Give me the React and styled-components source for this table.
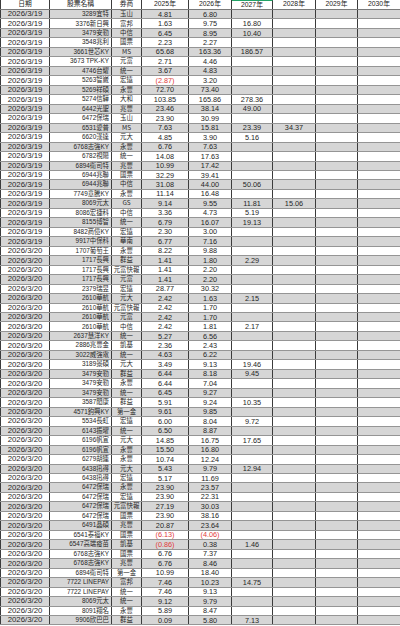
import React from "react";
import styled, { createGlobalStyle } from "styled-components";

const GlobalStyle = createGlobalStyle`
  html, body {
    margin: 0;
    padding: 0;
    background: #fff;
    overflow: hidden;
  }
`;

const COLS = "50px 62px 30px 47px 43px 41px 43px 42px 42px";

const data = [
  ["2026/3/19", "3289宜特", "玉山", "4.81", "6.80"],
  ["2026/3/19", "3376新日興", "富邦", "1.63", "9.75", "16.80"],
  ["2026/3/19", "3479安勤", "中信", "6.45", "8.95", "10.40"],
  ["2026/3/19", "3548兆利", "國票", "2.23", "2.27"],
  ["2026/3/19", "3661世芯KY", "MS", "65.68", "163.36", "186.57"],
  ["2026/3/19", "3673 TPK-KY", "元富", "2.71", "4.46"],
  ["2026/3/19", "4746台耀", "統一", "3.67", "4.83"],
  ["2026/3/19", "5263智崴", "宏遠", "(2.87)", "3.20"],
  ["2026/3/19", "5269祥碩", "永豐", "72.70", "73.40"],
  ["2026/3/19", "5274信驊", "大和", "103.85", "165.86", "278.36"],
  ["2026/3/19", "6442光聖", "兆豐", "23.46", "38.14", "49.00"],
  ["2026/3/19", "6472保瑞", "玉山", "23.90", "30.99"],
  ["2026/3/19", "6531愛普", "MS", "7.63", "15.81", "23.39", "34.37"],
  ["2026/3/19", "6620漢達", "元大", "4.85", "3.90", "5.16"],
  ["2026/3/19", "6768志強KY", "永豐", "6.76", "7.63"],
  ["2026/3/19", "6782視陽", "統一", "14.08", "17.63"],
  ["2026/3/19", "6894衛司特", "兆豐", "10.99", "17.42"],
  ["2026/3/19", "6944兆聯", "國票", "32.29", "39.41"],
  ["2026/3/19", "6944兆聯", "中信", "31.08", "44.00", "50.06"],
  ["2026/3/19", "7749意騰KY", "永豐", "11.14", "16.48"],
  ["2026/3/19", "8069元太", "GS", "9.14", "9.55", "11.81", "15.06"],
  ["2026/3/19", "8086宏捷科", "中信", "3.36", "4.73", "5.19"],
  ["2026/3/19", "8155博智", "統一", "6.79", "16.07", "19.13"],
  ["2026/3/19", "8482商億KY", "宏遠", "2.30", "3.00"],
  ["2026/3/19", "9917中保科", "華南", "6.77", "7.16"],
  ["2026/3/20", "1707葡萄王", "永豐", "8.22", "9.88"],
  ["2026/3/20", "1717長興", "群益", "1.41", "1.80", "2.29"],
  ["2026/3/20", "1717長興", "元富快報", "1.41", "2.20"],
  ["2026/3/20", "1717長興", "元富", "1.41", "2.20"],
  ["2026/3/20", "2379瑞昱", "宏遠", "28.77", "30.32"],
  ["2026/3/20", "2610華航", "元大", "2.42", "1.63", "2.15"],
  ["2026/3/20", "2610華航", "元富快報", "2.42", "1.70"],
  ["2026/3/20", "2610華航", "元富", "2.42", "1.70"],
  ["2026/3/20", "2610華航", "中信", "2.42", "1.81", "2.17"],
  ["2026/3/20", "2637慧洋KY", "統一", "5.27", "6.56"],
  ["2026/3/20", "2886兆豐金", "凱基", "2.36", "2.43"],
  ["2026/3/20", "3022威強電", "統一", "4.63", "6.22"],
  ["2026/3/20", "3189景碩", "元大", "3.49", "9.13", "19.46"],
  ["2026/3/20", "3479安勤", "群益", "6.44", "8.18", "9.45"],
  ["2026/3/20", "3479安勤", "永豐", "6.44", "7.04"],
  ["2026/3/20", "3479安勤", "統一", "6.45", "9.27"],
  ["2026/3/20", "3587閎康", "群益", "5.91", "9.24", "10.35"],
  ["2026/3/20", "4571鈞興KY", "第一金", "9.61", "9.85"],
  ["2026/3/20", "5534長虹", "宏遠", "6.00", "8.04", "9.72"],
  ["2026/3/20", "6143振曜", "統一", "6.50", "8.87"],
  ["2026/3/20", "6196帆宣", "元大", "14.85", "16.75", "17.65"],
  ["2026/3/20", "6196帆宣", "永豐", "15.50", "16.80"],
  ["2026/3/20", "6279胡連", "永豐", "10.74", "12.24"],
  ["2026/3/20", "6438迅得", "元大", "5.43", "9.79", "12.94"],
  ["2026/3/20", "6438迅得", "宏遠", "5.17", "11.69"],
  ["2026/3/20", "6472保瑞", "永豐", "23.90", "23.57"],
  ["2026/3/20", "6472保瑞", "宏遠", "23.90", "22.31"],
  ["2026/3/20", "6472保瑞", "元富快報", "27.19", "30.03"],
  ["2026/3/20", "6472保瑞", "國票", "23.90", "38.16"],
  ["2026/3/20", "6491晶碩", "兆豐", "20.87", "23.64"],
  ["2026/3/20", "6541泰福KY", "國票", "(6.13)", "(4.06)"],
  ["2026/3/20", "6547高端疫苗", "凱基", "(0.86)", "0.38", "1.46"],
  ["2026/3/20", "6768志強KY", "國票", "6.76", "7.37"],
  ["2026/3/20", "6768志強KY", "兆豐", "6.76", "8.46"],
  ["2026/3/20", "6894衛司特", "第一金", "10.99", "18.40"],
  ["2026/3/20", "7722 LINEPAY", "富邦", "7.46", "10.23", "14.75"],
  ["2026/3/20", "7722 LINEPAY", "統一", "7.46", "9.13"],
  ["2026/3/20", "8069元太", "統一", "9.12", "9.79"],
  ["2026/3/20", "8091翔名", "永豐", "5.89", "8.47"],
  ["2026/3/20", "9906欣巴巴", "群益", "0.09", "5.80", "7.13"],
];

const headers = ["日期", "股票名稱", "券商", "2025年", "2026年", "2027年", "2028年", "2029年", "2030年"];

const Sheet = styled.div`
  width: 400px;
  display: flex;
  flex-direction: column;
  font-family: "Liberation Sans", "Noto Sans CJK TC", sans-serif;
  color: #262626;
`;

const HeaderRow = styled.div`
  display: grid;
  grid-template-columns: ${COLS};
  height: 10px;
  box-sizing: border-box;
  border-bottom: 1px solid #7a7a7a;
  background: #fff;
`;

const Row = styled.div`
  display: grid;
  grid-template-columns: ${COLS};
  height: 9.48px;
  box-sizing: border-box;
  border-bottom: 1px solid #959595;
  background: ${(p) => (p.$shade ? "#d6d6d6" : "#fff")};
`;

const Cell = styled.div`
  display: flex;
  align-items: center;
  justify-content: ${(p) => (p.$kind === "name" ? "flex-end" : "center")};
  padding-right: ${(p) => (p.$kind === "name" ? "2px" : "0")};
  white-space: nowrap;
  overflow: hidden;
  border-right: 1px solid #3c3c3c;
  box-sizing: border-box;
  font-size: ${(p) =>
    p.$kind === "date" ? "7.8px" : p.$kind === "name" || p.$kind === "broker" ? "6.4px" : "7.3px"};
  color: ${(p) => (p.$neg ? "#e23b3b" : "#262626")};
  line-height: 1;
  font-family: ${(p) =>
    p.$kind === "broker"
      ? `"Noto Sans CJK TC", "Liberation Sans", sans-serif`
      : `"Liberation Sans", "Noto Sans CJK TC", sans-serif`};

  &:first-child {
    border-left: 1px solid #3c3c3c;
  }
  &:last-child {
    border-right: none;
  }
`;

const HeadCell = styled(Cell)`
  justify-content: center;
  padding-right: 0;
  font-size: 6.8px;
  color: #222;
  border-top: ${(p) => (p.$picked ? "1px solid #21a366" : "none")};
`;

const kinds = ["date", "name", "broker", "num", "num", "num", "num", "num", "num"];

export default function App() {
  return (
    <>
      <GlobalStyle />
      <Sheet>
        <HeaderRow>
          {headers.map((h) => (
            <HeadCell key={h} $picked={h === "2027年"}>
              {h}
            </HeadCell>
          ))}
        </HeaderRow>
        {data.map((r, i) => (
          <Row key={i} $shade={i % 2 === 0}>
            {kinds.map((k, j) => {
              const v = r[j] || "";
              return (
                <Cell key={j} $kind={k} $neg={v.startsWith("(")}>
                  {v}
                </Cell>
              );
            })}
          </Row>
        ))}
      </Sheet>
    </>
  );
}
